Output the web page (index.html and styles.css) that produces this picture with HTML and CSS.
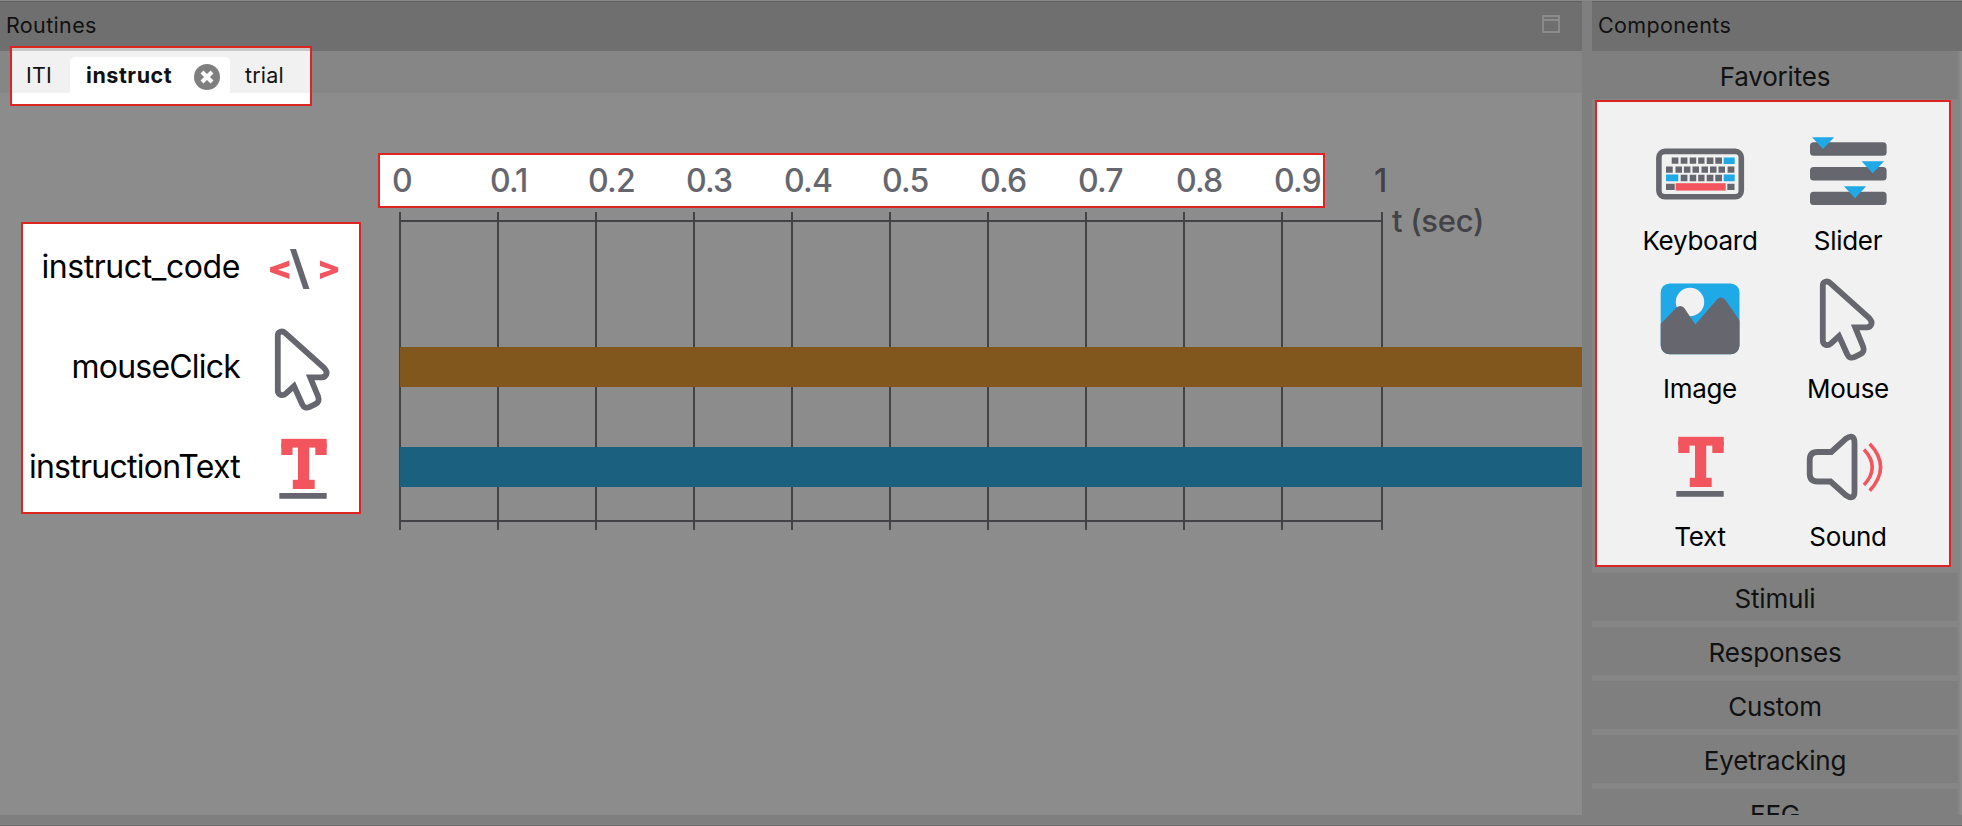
FILE: index.html
```html
<!DOCTYPE html>
<html lang="en">
<head>
<meta charset="utf-8">
<title>Routines</title>
<link rel="stylesheet" href="styles.css">
</head>
<body>
<svg class="defs" aria-hidden="true">
  <symbol id="i-mouse" viewBox="0 0 96 96">
    <path d="M22.8 12.5C22.8 8.4 27.3 7.400 30 9.900L69.300 45.200C73.500 49.400 71.500 54.200 66.500 54.400L55.200 54.400L63 73.200C64.400 77 63.800 79.300 60.300 81.200L54.800 83.800C51.400 85.400 48.800 84.700 47.200 81.200L39 63.100L30.800 70.600C27.400 73.600 22.800 71.800 22.800 67.500Z" fill="none" stroke="#66676e" stroke-width="5.8" stroke-linejoin="miter"/>
  </symbol>
  <symbol id="i-text" viewBox="0 0 96 96">
    <g fill="#f2555e"><rect x="26.3" y="15.8" width="45.4" height="8.8"/><rect x="26.3" y="20" width="11.2" height="12"/><rect x="60.3" y="20" width="11.4" height="12"/><rect x="43" y="20" width="11.2" height="42"/><rect x="37.8" y="56.8" width="21.9" height="9.2"/></g>
    <rect x="24.3" y="70" width="47.4" height="5.8" rx=".6" fill="#66676e"/>
  </symbol>
</svg>
<div class="app">
  <main class="routines">
    <header class="bar"><span>Routines</span>
      <svg class="max" viewBox="0 0 18 18"><path d="M1 1H17V17H1ZM1 5H17" fill="none" stroke="#8b8b8b" stroke-width="2"/></svg>
    </header>
    <div class="strip">
      <nav class="tabs">
        <span class="tab iti">ITI</span>
        <span class="tab active"><b>instruct</b>
          <svg class="close" viewBox="0 0 26 26"><circle cx="13" cy="13" r="13" fill="#7f7f7f"/><path d="M8 8L18 18M18 8L8 18" stroke="#fff" stroke-width="4.2"/></svg>
        </span>
        <span class="tab trial">trial</span>
      </nav>
    </div>
    <div class="canvas">
      <section class="names">
        <div class="row"><span class="n1">instruct_code</span><svg viewBox="0 0 96 96"><path d="M34.4 37.6V43L23 46.8L34.4 50.6V56L15 49V44.6ZM65 37.6V43L76.4 46.8L65 50.6V56L83.2 49V44.6Z" fill="#f2555e"/><path d="M35 26H41L54.5 66H48.3Z" fill="#66676e"/></svg></div>
        <div class="row"><span class="n2">mouseClick</span><svg><use href="#i-mouse"/></svg></div>
        <div class="row"><span class="n3">instructionText</span><svg><use href="#i-text"/></svg></div>
      </section>
      <section class="timeline">
        <div class="ruler">
          <div class="ticks"><span>0</span><span>0.1</span><span>0.2</span><span>0.3</span><span>0.4</span><span>0.5</span><span>0.6</span><span>0.7</span><span>0.8</span><span>0.9</span></div>
          <span class="one">1</span>
        </div>
        <div class="plot">
          <svg class="grid" viewBox="0 0 1183 318">
            <path d="M1 0V318M99 0V318M197 0V318M295 0V318M393 0V318M491 0V318M589 0V318M687 0V318M785 0V318M883 0V318M983 0V318M0 9H984M0 309H984" stroke="#434347" stroke-width="2" fill="none"/>
            <rect x="1" y="135" width="1182" height="40" fill="#81571d"/>
            <rect x="1" y="235" width="1182" height="40" fill="#1b617f"/>
          </svg>
          <span class="unit">t (sec)</span>
        </div>
      </section>
    </div>
  </main>
  <aside class="components">
    <header class="bar"><span>Components</span></header>
    <div class="list">
      <div class="cat">Favorites</div>
      <div class="favs">
        <div class="cell"><svg viewBox="0 0 96 96">
          <rect x="6.9" y="26.4" width="82.4" height="45.4" rx="6" fill="none" stroke="#66676e" stroke-width="5.6"/>
          <g fill="#66676e">
            <path d="M19.7 32.4h6.7v6.3h-6.7zM28.7 32.4h6.7v6.3h-6.7zM37.7 32.4h6.5v6.3h-6.5zM46.2 32.4h6.3v6.3h-6.3zM54.7 32.6h6.7v6.3h-6.7zM63.3 32.4h6.7v6.3h-6.7z"/>
            <path d="M14 41.4h6.7v6.3h-6.7zM23.5 41.4h6.5v6.3h-6.5zM31.9 41.4h6.5v6.3h-6.5zM40.5 41.4h6.5v6.3h-6.5zM49.5 41.4h6.5v6.3h-6.5zM58 41.4h6.5v6.3h-6.5zM66.5 41.4h6.5v6.3h-6.5zM75.6 41.4h6.8v6.3h-6.8z"/>
            <path d="M28.7 49.8h6.7v6.4h-6.7zM37.7 49.8h6.5v6.4h-6.5zM46.2 49.8h6.3v6.4h-6.3zM54.7 49.8h6.7v6.4h-6.7zM63.3 49.8h6.7v6.4h-6.7z"/>
            <path d="M14 58.7h8.7v6.4h-8.7zM75.3 58.7h7.2v6.4h-7.2z"/>
          </g>
          <path d="M71.7 32.4h11v6.6h-11zM14 49.6h12.3v6.6h-12.3zM71.7 49.6h11v6.6h-11z" fill="#1fa9e6"/>
          <rect x="23.7" y="58.2" width="50" height="7.4" fill="#f2555e"/></svg><span>Keyboard</span></div>
        <div class="cell"><svg viewBox="0 0 96 96"><g fill="#66676e"><rect x="10" y="17.3" width="76.6" height="13.4" rx="3.5"/><rect x="10" y="42" width="76.6" height="13.4" rx="3.5"/><rect x="10" y="66.7" width="76.6" height="13.4" rx="3.5"/></g><path d="M12 12.2H34.2L23 24ZM61.5 36.2H84L72.7 48.3ZM44 61.3H66.2L55 73.3Z" fill="#1fa9e6"/></svg><span>Slider</span></div>
        <div class="cell"><svg viewBox="0 0 96 96"><clipPath id="frame"><rect x="8.7" y="10.4" width="78.8" height="70.9" rx="9"/></clipPath><g clip-path="url(#frame)"><path d="M8 10H88V82H8Z" fill="#1fa9e6"/><circle cx="38" cy="29" r="14.2" fill="#f1f1f1"/><path d="M8 51.5L24 35Q28.3 30.8 32.3 35L43.3 51.5L65 26.6Q69 22.4 73 26.6L88 48V82H8Z" fill="#66676e"/></g></svg><span>Image</span></div>
        <div class="cell"><svg><use href="#i-mouse"/></svg><span>Mouse</span></div>
        <div class="cell"><svg><use href="#i-text"/></svg><span>Text</span></div>
        <div class="cell"><svg viewBox="0 0 96 96"><path d="M31.3 31H17.5Q9.7 31 9.7 39V52.5Q9.7 60.5 17.5 60.5H30.5L45.5 74Q54.5 80 54.5 70.500V22Q54.5 12 45.5 18Z" fill="none" stroke="#66676e" stroke-width="5.8"/><path d="M64 28.5Q80.5 46.2 64 64M69.7 22.8Q91.5 46.2 69.7 69.7" fill="none" stroke="#f2555e" stroke-width="3.5"/></svg><span>Sound</span></div>
      </div>
      <div class="cat">Stimuli</div>
      <div class="cat">Responses</div>
      <div class="cat">Custom</div>
      <div class="cat">Eyetracking</div>
      <div class="cat">EEG</div>
    </div>
  </aside>
</div>
</body>
</html>
```
FILE: styles.css
```css
* { box-sizing: border-box; }
html, body { height: 826px; overflow: hidden; }
body { margin: 0; font-family: Inter, "Liberation Sans", sans-serif; color: #111; }
svg { display: block; flex: none; }
.defs { position: absolute; top: 0; width: 0; height: 0; }
.app { width: 1962px; height: 826px; display: grid; grid-template-columns: 1582px 370px; column-gap: 10px; background: #7f7f7f; border-top: 1px solid #888; border-bottom: 1px solid #6c6c6c; padding-bottom: 10px; overflow: hidden; }
.routines { display: flex; flex-direction: column; min-width: 0; height: 814px; }
.bar { height: 50px; flex: none; background: #6f6f6f; border-top: 1px solid #616161; display: flex; align-items: center; justify-content: space-between; padding: 0 22px 3px 6px; font-size: 21.5px; letter-spacing: 0.35px; }
.bar .max { width: 18px; height: 18px; margin-top: -2px; }
.strip { height: 42px; flex: none; background: #868686; }
.tabs { position: relative; margin: -5px 0 0 10px; width: 302px; height: 60px; border: 2px solid #dc2522; background: linear-gradient(#c9c9c9 0 3px, #f1f1f1 3px 45px, #fff 45px); display: flex; padding-top: 9px; font-size: 21.5px; letter-spacing: 0.2px; }
.tab { height: 36px; display: flex; align-items: center; }
.iti { width: 58px; padding-left: 14px; }
.active { width: 160px; background: #fff; border-radius: 5px 5px 0 0; padding-left: 16px; justify-content: space-between; padding-right: 10px; }
.active b { letter-spacing: 0.55px; }
.close { width: 26px; height: 26px; margin-top: 4px; }
.trial { padding-left: 15px; }
.canvas { flex: 1; background: #8c8c8c; display: flex; align-items: flex-start; }
.names { margin: 129px 0 0 21px; width: 340px; height: 292px; flex: none; border: 2px solid #dc2522; background: #fff; color: #000; font-size: 32px; }
.row { height: 100px; display: flex; align-items: center; justify-content: flex-end; padding-right: 8px; gap: 15px; }
.row:first-child { margin-top: -3px; }
.row span { margin-top: -10px; white-space: nowrap; }
.n1 { letter-spacing: -0.42px; }
.n2 { letter-spacing: -0.8px; }
.n3 { letter-spacing: -0.73px; }
.row svg { width: 96px; height: 96px; }
.timeline { margin: 60px 0 0 17px; width: 1204px; flex: none; }
.ruler { display: flex; align-items: center; height: 55px; font-size: 32px; font-weight: 500; color: #66676e; letter-spacing: -0.8px; }
.ticks { width: 947px; height: 55px; border: 2px solid #dc2522; background: #fff; display: grid; grid-template-columns: repeat(10, 98px); align-items: center; padding-left: 12px; }
.one { margin-left: 49px; color: #434347; }
.plot { position: relative; margin: 4px 0 0 21px; }
.grid { width: 1183px; height: 318px; }
.unit { position: absolute; left: 993px; top: -10px; font-size: 31px; font-weight: 500; letter-spacing: -0.3px; color: #434347; }
.components { height: 814px; display: flex; flex-direction: column; overflow: hidden; }
.list { flex: 1; min-height: 0; overflow: hidden; background: #868686; border-right: 2px solid #8c8c8c; padding-right: 2px; display: flex; flex-direction: column; gap: 6px; }
.cat { height: 48px; flex: none; background: #7f7f7f; display: flex; align-items: center; justify-content: center; font-size: 26px; padding-top: 2px; letter-spacing: -0.2px; }
.favs { margin: -5px 0 0 3px; width: 356px; height: 467px; flex: none; border: 2px solid #dc2522; background: #f1f1f1; color: #000; display: grid; grid-template-columns: 148px 148px; grid-auto-rows: 148px; padding: 23px 0 0 29px; }
.cell { display: flex; flex-direction: column; align-items: center; font-size: 26px; letter-spacing: -0.3px; }
.cell svg { width: 96px; height: 96px; }
.cell span { margin-top: 4px; }
```
